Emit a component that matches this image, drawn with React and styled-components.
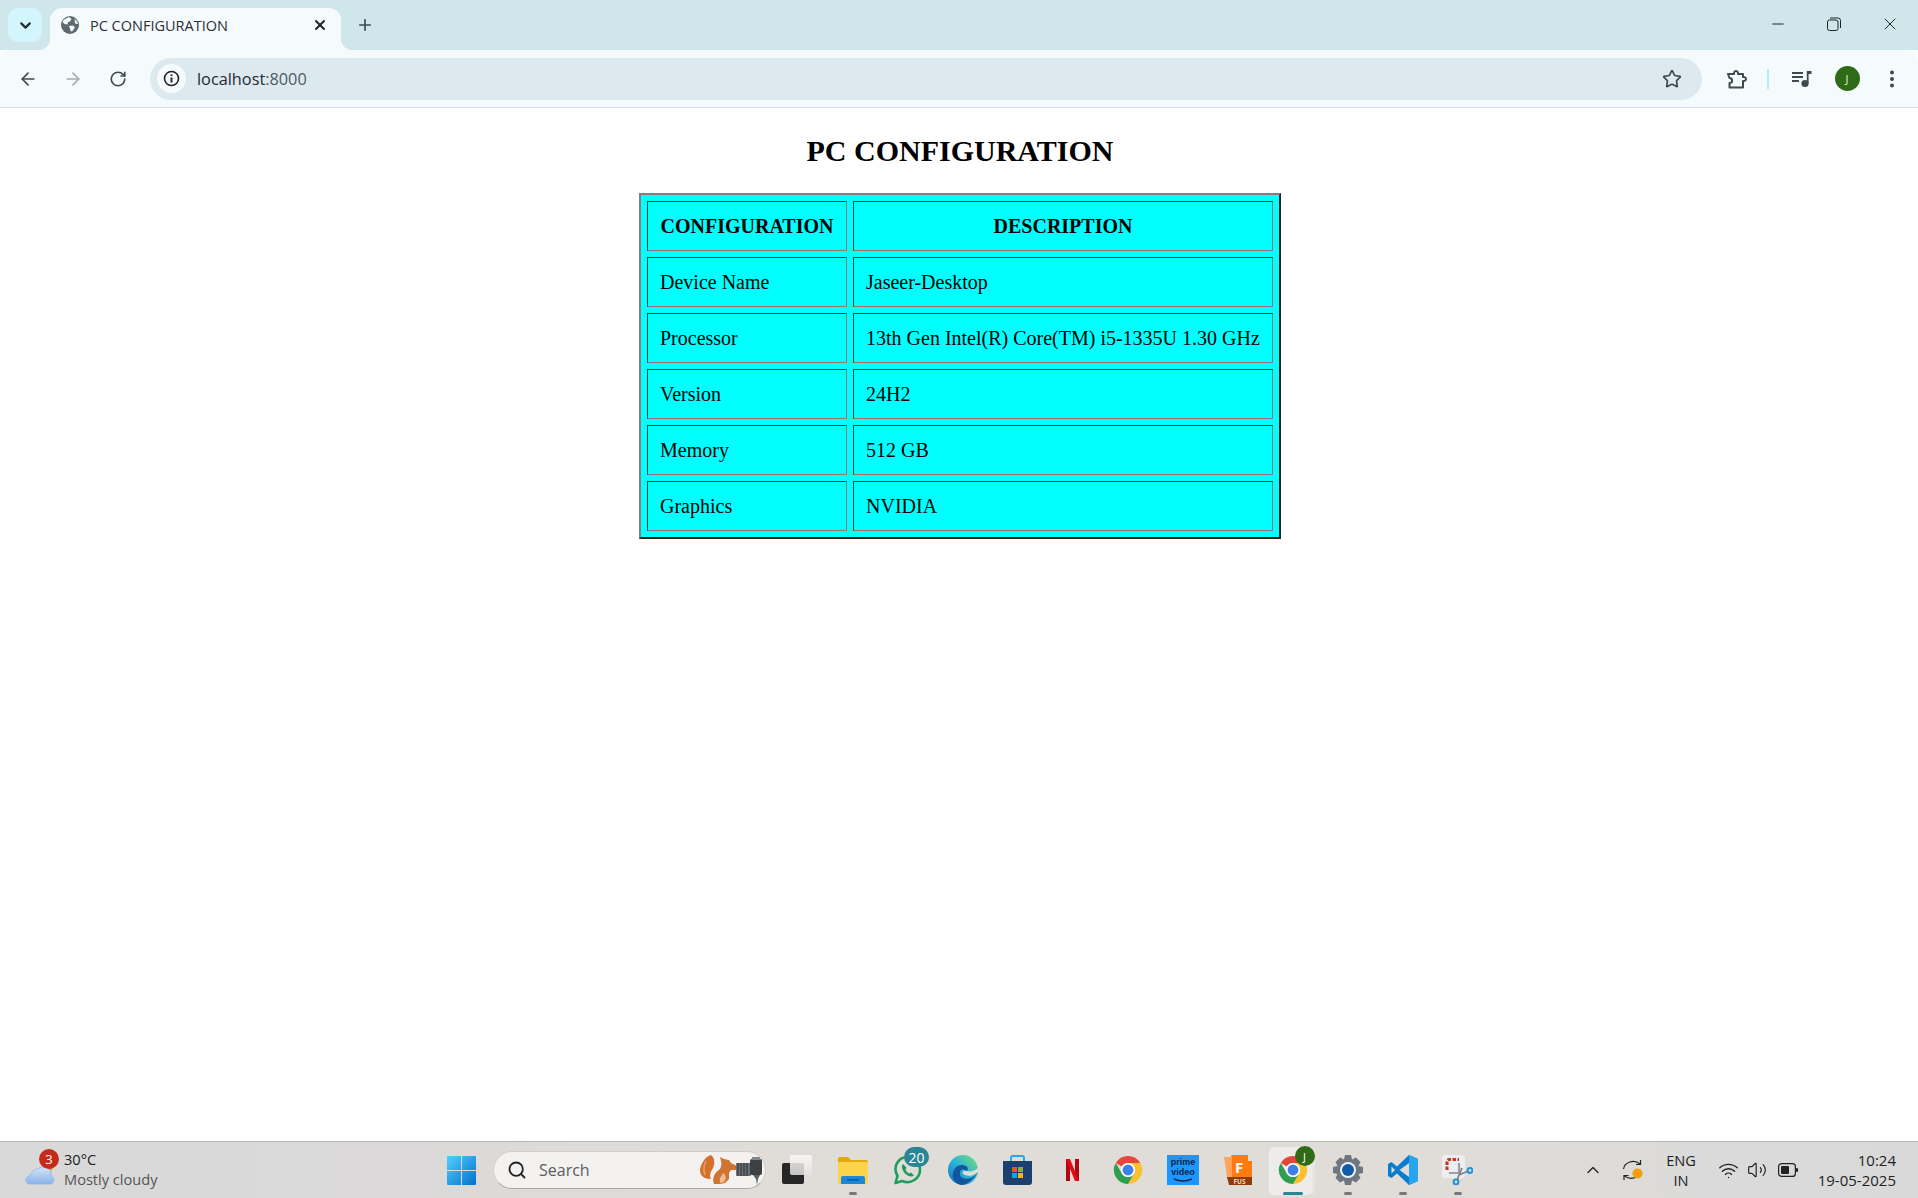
import React from "react";
import styled, { createGlobalStyle } from "styled-components";
import { ArrowLeft, ArrowRight, ChevronDown, ChevronUp, Minus, Plus, RotateCw, Search, Star, Volume2, Wifi, X } from "lucide-react";

const UI_FONT = `"Open Sans", "Noto Sans", sans-serif`;

const GlobalStyle = createGlobalStyle`
  html, body {
    margin: 0;
    padding: 0;
    height: 100%;
    overflow: hidden;
    background: white;
  }
  #root {
    height: 100%;
  }
`;

const Shell = styled.div`
  height: 100vh;
  display: flex;
  flex-direction: column;
  font-family: ${UI_FONT};
`;

const TabStrip = styled.div`
  flex: 0 0 50px;
  display: flex;
  align-items: flex-end;
  background: #cfe6eb;
  padding-left: 8px;
  color: #2a3338;
`;

const TabSearch = styled.div`
  width: 34px;
  height: 34px;
  margin-bottom: 8px;
  border-radius: 10px;
  background: #d3f6fd;
  display: flex;
  align-items: center;
  justify-content: center;
`;

const Tab = styled.div`
  position: relative;
  width: 291px;
  height: 42px;
  margin-left: 8px;
  box-sizing: border-box;
  padding: 0 13px 8px 11px;
  background: #f5fafd;
  border-radius: 12px 12px 0 0;
  display: flex;
  align-items: center;
  &::before, &::after {
    content: "";
    position: absolute;
    bottom: 0;
    width: 12px;
    height: 12px;
  }
  &::before {
    left: -12px;
    background: radial-gradient(circle at 0 0, transparent 12px, #f5fafd 12.5px);
  }
  &::after {
    right: -12px;
    background: radial-gradient(circle at 100% 0, transparent 12px, #f5fafd 12.5px);
  }
`;

const TabTitle = styled.span`
  flex: 1;
  margin-left: 11px;
  font-size: 14.5px;
  color: #2b2f33;
  white-space: nowrap;
`;

const NewTab = styled.div`
  margin: 0 0 16px 15px;
  display: flex;
  color: #3c4a50;
`;

const WindowControls = styled.div`
  margin-left: auto;
  align-self: flex-start;
  display: flex;
  color: #222;
`;

const WindowControl = styled.div`
  width: 56px;
  height: 48px;
  display: flex;
  align-items: center;
  justify-content: center;
`;

const Toolbar = styled.div`
  flex: 0 0 57px;
  box-sizing: border-box;
  display: flex;
  align-items: center;
  background: #f5fafd;
  border-radius: 10px 10px 0 0;
  margin-top: 0;
  color: #3d4b51;
`;

const NavSlot = styled.div`
  width: ${(props) => props.$width || 45}px;
  margin-left: ${(props) => props.$left || 0}px;
  display: flex;
  justify-content: center;
  color: ${(props) => props.$muted ? "#a3abaf" : "#3d4b51"};
`;

const Omnibox = styled.div`
  width: 1552px;
  height: 42px;
  margin-left: 10px;
  box-sizing: border-box;
  padding: 0 20px 0 7px;
  border-radius: 21px;
  background: #dceaef;
  display: flex;
  align-items: center;
`;

const SiteInfo = styled.div`
  width: 29px;
  height: 29px;
  border-radius: 50%;
  background: #f5fafd;
  display: flex;
  align-items: center;
  justify-content: center;
`;

const Address = styled.span`
  flex: 1;
  margin-left: 11px;
  font-size: 16.3px;
  color: #1f2933;
  span {
    color: #4d5a61;
  }
`;

const Divider = styled.div`
  width: 2px;
  height: 20px;
  margin-left: 8px;
  background: #aeeffc;
`;

const Avatar = styled.div`
  width: 25px;
  height: 25px;
  border-radius: 50%;
  background: #2f6a17;
  color: #e6f0dd;
  font-size: 11px;
  display: flex;
  align-items: center;
  justify-content: center;
`;

const Rule = styled.div`
  flex: 0 0 1px;
  background: #d5e2e5;
`;

const Page = styled.main`
  flex: 1;
  padding-left: 2px;
  background: white;
  font-family: "Liberation Serif", "Times New Roman", serif;
  color: black;
`;

const Heading = styled.h1`
  margin: 0;
  padding-top: 24px;
  height: 61px;
  box-sizing: content-box;
  text-align: center;
  font-size: 30px;
  line-height: 37px;
  font-weight: bold;
`;

const ConfigTable = styled.table`
  margin: 0 auto;
  border-collapse: separate;
  border-spacing: 6px;
  border-width: 2px;
  border-style: solid;
  border-color: #808080 #222 #222 #808080;
  background: #00ffff;
  font-size: 20px;
`;

const HeadCell = styled.th`
  height: 50px;
  box-sizing: border-box;
  padding: 0 12px;
  width: ${(props) => props.$width}px;
  border-width: 1px;
  border-style: solid;
  border-color: #1c3a3f #a07070 #a07070 #1c3a3f;
  font-weight: bold;
  text-align: center;
`;

const Cell = styled.td`
  height: 50px;
  box-sizing: border-box;
  padding: 0 12px;
  border-width: 1px;
  border-style: solid;
  border-color: #1c3a3f #a07070 #a07070 #1c3a3f;
`;

const Taskbar = styled.footer`
  flex: 0 0 57px;
  box-sizing: border-box;
  border-top: 1px solid #b8b6b4;
  display: flex;
  align-items: center;
  background: linear-gradient(90deg, #d9d9da 0%, #dbd9d9 20%, #e0dcd8 40%, #e0dcd8 75%, #dcdbda 85%, #d9d9d9 100%);
  color: #1c1c1c;
`;

const Weather = styled.div`
  flex: 0 0 434px;
  box-sizing: border-box;
  padding-left: 25px;
  display: flex;
  align-items: center;
`;

const WeatherIcon = styled.div`
  position: relative;
  width: 30px;
  height: 40px;
  display: flex;
  align-items: flex-end;
  padding-bottom: 5px;
  box-sizing: border-box;
`;

const CountBadge = styled.span`
  position: absolute;
  top: ${(props) => props.$top}px;
  right: ${(props) => props.$right}px;
  min-width: ${(props) => props.$size}px;
  height: ${(props) => props.$height || props.$size}px;
  border-radius: 10px;
  background: ${(props) => props.$color};
  color: white;
  font-size: ${(props) => props.$font}px;
  display: flex;
  align-items: center;
  justify-content: center;
`;

const WeatherText = styled.div`
  margin: 0 0 2px 9px;
  font-size: 14.6px;
  line-height: 20px;
  color: #202020;
  small {
    display: block;
    font-size: 14.6px;
    color: #555;
  }
`;

const Slot = styled.div`
  position: relative;
  flex: 0 0 55px;
  height: 56px;
  display: flex;
  align-items: center;
  justify-content: center;
`;

const ActiveTile = styled.div`
  position: absolute;
  left: 4px;
  top: 5px;
  width: 43px;
  height: 48px;
  border-radius: 5px;
  background: #eeecea;
  box-shadow: 4px 0 0 -1px #e8e5e2;
`;

const RunningMark = styled.span`
  position: absolute;
  bottom: 3px;
  left: 50%;
  transform: translateX(-50%);
  width: ${(props) => props.$active ? 20 : 8}px;
  height: 3px;
  border-radius: 2px;
  background: ${(props) => props.$active ? "#2a8595" : "#77787a"};
`;

const IconLayer = styled.div`
  position: relative;
  display: flex;
`;

const TaskSearch = styled.div`
  flex: 0 0 273px;
  height: 38px;
  margin: 0 4px;
  box-sizing: border-box;
  padding: 0 3px 0 13px;
  border-radius: 19px;
  background: #f3f2f1;
  border: 1px solid #d0cdca;
  border-bottom-color: #aaa8a6;
  display: flex;
  align-items: center;
  color: #222;
`;

const SearchLabel = styled.span`
  flex: 1;
  margin-left: 12px;
  font-size: 16px;
  color: #5c5c5c;
`;

const Tray = styled.div`
  margin-left: 88px;
  display: flex;
  align-items: center;
  color: #222;
`;

const TrayItem = styled.div`
  flex: 0 0 ${(props) => props.$width}px;
  display: flex;
  justify-content: center;
`;

const Language = styled.div`
  text-align: center;
  font-size: 14.6px;
  line-height: 20px;
`;

const Clock = styled.div`
  flex: 0 0 87px;
  text-align: right;
  font-size: 15px;
  line-height: 20px;
  white-space: nowrap;
`;

const rows = [
  ["Device Name", "Jaseer-Desktop"],
  ["Processor", "13th Gen Intel(R) Core(TM) i5-1335U 1.30 GHz"],
  ["Version", "24H2"],
  ["Memory", "512 GB"],
  ["Graphics", "NVIDIA"],
];

const GlobeIcon = () => <svg width="18" height="18" viewBox="0 0 18 18">
  <circle cx="9" cy="9" r="9" fill="#5f6a70" />
  <path d="M3 3.5 L8 1 L10.5 3 L9 5.5 L7 6 L6.5 8.5 L3.5 8 L1.5 6 Z" fill="#f5fafd" />
  <path d="M8 10 L12 9.5 L14 11.5 L11 15.5 L9.5 15 L9 12.5 Z" fill="#f5fafd" />
  <path d="M13.5 3 L16 5 L17 8 L14 7.5 Z" fill="#f5fafd" />
</svg>;

const InfoIcon = () => <svg width="17" height="17" viewBox="0 0 17 17" fill="none" stroke="#222">
  <circle cx="8.5" cy="8.5" r="7" strokeWidth="1.6" />
  <path d="M8.5 7.5 V12.5" strokeWidth="1.9" />
  <path d="M8.5 4.4 V6" strokeWidth="1.9" />
</svg>;

const RestoreIcon = () => <svg width="14" height="14" viewBox="0 0 14 14" fill="none" stroke="#222" strokeWidth="1">
  <rect x="0.5" y="3" width="10.5" height="10.5" rx="2" />
  <path d="M3 1 H11 Q13.5 1 13.5 3.5 V11" />
</svg>;

const ExtensionIcon = () => <svg width="22" height="22" viewBox="0 0 22 22" fill="none" stroke="#3d4b51" strokeWidth="2" strokeLinejoin="round">
  <path d="M2 6 H8 C7.5 2 12.5 2 12 6 H17 V9 C21 8.5 21 13.5 17 13 V19.5 H3.5 V15 C7 15 7 10 3.5 10 Z" />
</svg>;

const MediaIcon = () => <svg width="20" height="18" viewBox="0 0 20 18" fill="#3d4b51">
  <rect x="0" y="2" width="11" height="2" />
  <rect x="0" y="6" width="11" height="2" />
  <rect x="0" y="10" width="7" height="2" />
  <circle cx="13" cy="13.5" r="3.6" />
  <path d="M14.8 13.5 V1 H19.5 V4 H16.6 V13.5 Z" />
</svg>;

const DotsIcon = () => <svg width="6" height="18" viewBox="0 0 6 18" fill="#3d4b51">
  <circle cx="3" cy="2.5" r="2" />
  <circle cx="3" cy="9" r="2" />
  <circle cx="3" cy="15.5" r="2" />
</svg>;

const CloudIcon = () => <svg width="30" height="22" viewBox="0 0 30 22">
  <defs>
    <linearGradient id="cloudFill" x1="0" y1="0" x2="0" y2="1">
      <stop offset="0" stopColor="#d4e4f8" />
      <stop offset="1" stopColor="#8ab2ea" />
    </linearGradient>
  </defs>
  <circle cx="24" cy="4" r="4" fill="#f0922b" />
  <path d="M5 21 C0 21 -1 14 5 13 C6 8 10 6 13 6 C16 3 24 3 26 9 C26 11 26 12 26 13 C30 14 30 21 25 21 Z" fill="url(#cloudFill)" stroke="#8ab2ea" strokeWidth="0.8" />
</svg>;

const WindowsIcon = () => <svg width="29" height="29" viewBox="0 0 29 29">
  <defs>
    <linearGradient id="winFill" x1="0" y1="0" x2="1" y2="1">
      <stop offset="0" stopColor="#4fd1fb" />
      <stop offset="1" stopColor="#0370d0" />
    </linearGradient>
  </defs>
  <path d="M1 0 H14 V14 H0 V1 Q0 0 1 0 Z M15 0 H28 Q29 0 29 1 V14 H15 Z M0 15 H14 V29 H1 Q0 29 0 28 Z M15 15 H29 V28 Q29 29 28 29 H15 Z" fill="url(#winFill)" />
</svg>;

const SquirrelIcon = () => <svg width="62" height="30" viewBox="0 0 62 30">
  <path d="M11 0 C6 1 1 8 0 15 C0 21 4 24 11 24 C9 20 11 16 13 13 C15 9 15 3 11 0 Z" fill="#d4702c" />
  <path d="M6 6 C4 10 3 15 5 20" fill="none" stroke="#e9a06a" strokeWidth="1.5" />
  <path d="M14 29 C12 24 14 18 19 15 C21 13 22 10 21 6 L20 2 L24 4 L29 5 L31 8 L37 11 L36 15 L31 15 L29 18 L29 24 L25 28 L20 29 Z" fill="#cf7533" />
  <path d="M20 28 C19 24 21 20 24 18 L26 23 L24 27 Z" fill="#efbd94" />
  <rect x="36" y="8" width="15" height="13" rx="1" fill="#6a7075" />
  <path d="M38 8 V21 M41 8 V21 M44 8 V21 M47 8 V21" stroke="#33373a" strokeWidth="1.2" />
  <rect x="50" y="4" width="12" height="16" rx="2" fill="#3c4043" />
  <rect x="52" y="2" width="8" height="3" fill="#82878b" />
  <path d="M53 20 H60 L58 24 L57 30 L56 24 Z" fill="#5a5f63" />
</svg>;

const TaskViewIcon = () => <svg width="32" height="30" viewBox="0 0 32 30">
  <defs>
    <linearGradient id="taskBack" x1="0" y1="0" x2="0" y2="1">
      <stop offset="0" stopColor="#fbfbfb" />
      <stop offset="1" stopColor="#e4e2e0" />
    </linearGradient>
  </defs>
  <rect x="0" y="8" width="22" height="21" rx="2" fill="#262626" />
  <rect x="8" y="0" width="22" height="20" rx="2" fill="url(#taskBack)" opacity="0.85" />
</svg>;

const FolderIcon = () => <svg width="30" height="28" viewBox="0 0 30 28">
  <path d="M0 3 Q0 1 2 1 H10 L13 4 H28 Q30 4 30 6 V10 H0 Z" fill="#e2a812" />
  <rect x="0" y="6" width="30" height="22" rx="1" fill="#fbd44a" />
  <path d="M3 28 V22 Q3 20 5 20 H25 Q27 20 27 22 V28 Z" fill="#1d88d8" />
  <rect x="9" y="23" width="12" height="1.6" fill="#0c5ea8" />
</svg>;

const WhatsappIcon = () => <svg width="29" height="30" viewBox="0 0 29 30" fill="none">
  <path d="M2.5 28 L4.5 21 C-1 11 6 2 14.5 2 C22 2 27 8 27 15 C27 23 18 30 9 26 Z" stroke="#1f9d5c" strokeWidth="2.6" strokeLinejoin="round" />
  <path d="M10 9 C8 11 9 15 12 18.5 C15 21.5 19 22.5 21 20.5 L18 17.5 L16 18.5 C14.5 17.5 13 16 12.5 14.5 L13.5 12.5 Z" fill="#1f9d5c" />
</svg>;

const EdgeIcon = () => <svg width="30" height="30" viewBox="0 0 30 30">
  <defs>
    <linearGradient id="edgeFill" x1="0" y1="1" x2="1" y2="0">
      <stop offset="0" stopColor="#0f6cc0" />
      <stop offset="0.5" stopColor="#2cb6d8" />
      <stop offset="1" stopColor="#7be06a" />
    </linearGradient>
  </defs>
  <circle cx="15" cy="15" r="15" fill="url(#edgeFill)" />
  <path d="M30 17 C26 24 19 30 13 30 C5 28 3 20 6 15 C8 10 14 9 18 11 C21 13 20 16 18 16 C15 13 11 15 12 20 C14 26 24 25 30 17 Z" fill="#11569f" />
  <path d="M18 16 C22 17 27 16 30 13 L30 17 C26 21 20 22 15 19 C14 17 16 15 18 16 Z" fill="#e0dcd8" />
</svg>;

const StoreIcon = () => <svg width="29" height="31" viewBox="0 0 29 31">
  <path d="M8 7 V3 Q8 1 10 1 H19 Q21 1 21 3 V7" fill="none" stroke="#26a8e8" strokeWidth="2" />
  <path d="M0 6 H29 V27 Q29 30 26 30 H3 Q0 30 0 27 Z" fill="#1c3f70" />
  <rect x="9" y="12" width="5" height="5" fill="#e8562a" />
  <rect x="15" y="12" width="5" height="5" fill="#80b820" />
  <rect x="9" y="18" width="5" height="5" fill="#10a5e8" />
  <rect x="15" y="18" width="5" height="5" fill="#fbb40c" />
</svg>;

const NetflixIcon = () => <svg width="13" height="22" viewBox="0 0 13 22">
  <path d="M0 0 H4 V22 L0 22 Z" fill="#b20710" />
  <path d="M9 0 H13 V22 L9 22 Z" fill="#b20710" />
  <path d="M0 0 H4 L13 22 H9 Z" fill="#e50914" />
</svg>;

const ChromeIcon = () => <svg width="30" height="30" viewBox="0 0 32 32">
  <path d="M3 8.5 A15 15 0 0 1 29 8.5 L16 8.5 A7.5 7.5 0 0 0 9.5 12.25 Z" fill="#e8453a" />
  <path d="M29 8.5 A15 15 0 0 1 16 31 L22.5 19.75 A7.5 7.5 0 0 0 22.5 12.25 L16 8.5 Z" fill="#fbc02d" />
  <path d="M16 31 A15 15 0 0 1 3 8.5 L9.5 19.75 A7.5 7.5 0 0 0 22.5 19.75 Z" fill="#2f9e4f" />
  <circle cx="16" cy="16" r="7.5" fill="white" />
  <circle cx="16" cy="16" r="5.8" fill="#3c80e8" />
</svg>;

const PrimeIcon = () => <svg width="32" height="30" viewBox="0 0 32 30">
  <rect width="32" height="30" fill="#1a98ff" />
  <text x="16" y="10" textAnchor="middle" fontSize="9" fontWeight="700" fontFamily="Liberation Sans, sans-serif" fill="#10253f">prime</text>
  <text x="16" y="20.4" textAnchor="middle" fontSize="9" fontWeight="700" fontFamily="Liberation Sans, sans-serif" fill="#10253f">video</text>
  <path d="M7 24 Q16 28 25 24" fill="none" stroke="#10253f" strokeWidth="1.5" />
</svg>;

const FusionIcon = () => <svg width="28" height="31" viewBox="0 0 28 31">
  <path d="M3 7 L8 0 H24 V6 H28 V24 H3 Z" fill="#ff7a10" />
  <path d="M0 2 H8 V22 H3 Z" fill="#ffa45a" />
  <path d="M3 22 H28 V30 H5 Z" fill="#8e3d08" />
  <text x="15" y="18" textAnchor="middle" fontSize="15" fontWeight="700" fontFamily="Open Sans, sans-serif" fill="white">F</text>
  <text x="15.5" y="29" textAnchor="middle" fontSize="6.5" fontWeight="700" fontFamily="Open Sans, sans-serif" fill="#f3d9c6">FUS</text>
</svg>;

const GearIcon = () => <svg width="30" height="30" viewBox="0 0 30 30">
  <path d="M12 0 H18 L19 4.5 L23 2.5 L27.5 7 L25.5 11 L30 12 V18 L25.5 19 L27.5 23 L23 27.5 L19 25.5 L18 30 H12 L11 25.5 L7 27.5 L2.5 23 L4.5 19 L0 18 V12 L4.5 11 L2.5 7 L7 2.5 L11 4.5 Z" fill="#6d7780" />
  <circle cx="15" cy="15" r="8" fill="#eef0f2" />
  <circle cx="15" cy="15" r="6" fill="#0f5cab" />
</svg>;

const VscodeIcon = () => <svg width="30" height="30" viewBox="0 0 30 30">
  <path d="M21 0 L30 4 V26 L21 30 L9 18.5 L3.5 23 L0 21 V9 L3.5 7 L9 11.5 Z" fill="#0a7ccd" />
  <path d="M21 0 L30 4 V26 L21 30 Z" fill="#2aa4ee" />
  <path d="M21 8 V22 L11.5 15 Z" fill="#e0dcd8" />
  <path d="M3.5 11.5 L7 15 L3.5 18.5 Z" fill="#e0dcd8" />
</svg>;

const SnipIcon = () => <svg width="31" height="30" viewBox="0 0 31 30" fill="none">
  <rect x="0" y="0" width="23" height="23" rx="3" fill="#eceef1" />
  <path d="M5 15 V7 Q5 4.5 7.5 4.5 H17" stroke="#c4341f" strokeWidth="3" strokeDasharray="3.4 1.6" />
  <path d="M17 8 V18 H7" stroke="#9aa0a6" strokeWidth="2.2" />
  <path d="M15 25 L20 13 M17 20 L26 16" stroke="#7d8489" strokeWidth="1.8" />
  <circle cx="14" cy="27" r="2.4" stroke="#1f93d6" strokeWidth="2" />
  <circle cx="28" cy="15.5" r="2.4" stroke="#1f93d6" strokeWidth="2" />
</svg>;

const SyncIcon = () => <svg width="22" height="22" viewBox="0 0 22 22" fill="none" stroke="#222" strokeWidth="1.2">
  <path d="M1.5 10 C2.5 3 12 0 18 5" />
  <path d="M18.5 1 V5.5 H14" />
  <path d="M15 17.5 C11 20 6 19.5 2.5 17" />
  <path d="M2 21 V16.5 H6.5" />
  <circle cx="15.5" cy="14.5" r="5" fill="#f59e0b" stroke="none" />
</svg>;

const BatteryIcon = () => <svg width="20" height="14" viewBox="0 0 20 14">
  <rect x="0.6" y="0.6" width="16.8" height="12.8" rx="3" fill="none" stroke="#222" strokeWidth="1.2" />
  <rect x="3" y="3" width="8" height="8" rx="1" fill="#222" />
  <rect x="18" y="5" width="2" height="4" rx="1" fill="#222" />
</svg>;

const apps = [
  {key: "task", icon: <TaskViewIcon />},
  {key: "files", icon: <FolderIcon />, running: true},
  {key: "whatsapp", icon: <WhatsappIcon />, badge: "20"},
  {key: "edge", icon: <EdgeIcon />},
  {key: "store", icon: <StoreIcon />},
  {key: "netflix", icon: <NetflixIcon />},
  {key: "chrome", icon: <ChromeIcon />},
  {key: "prime", icon: <PrimeIcon />},
  {key: "fusion", icon: <FusionIcon />},
  {key: "chrome-active", icon: <ChromeIcon />, active: true},
  {key: "settings", icon: <GearIcon />, running: true},
  {key: "vscode", icon: <VscodeIcon />, running: true},
  {key: "snip", icon: <SnipIcon />, running: true},
];

const AppSlot = ({icon, badge, running, active}) => <Slot>
  {active && <ActiveTile />}
  <IconLayer>
    {icon}
    {badge && <CountBadge $top={-8} $right={-7} $size={25} $height={20} $font={14} $color="#2a8595">{badge}</CountBadge>}
    {active && <CountBadge $top={-9} $right={-7} $size={20} $font={11} $color="#2f6a17">J</CountBadge>}
  </IconLayer>
  {(running || active) && <RunningMark $active={active} />}
</Slot>;

export default function App() {
  return <Shell>
    <GlobalStyle />
    <TabStrip>
      <TabSearch><ChevronDown size={17} strokeWidth={3} color="#1f2a30" /></TabSearch>
      <Tab>
        <GlobeIcon />
        <TabTitle>PC CONFIGURATION</TabTitle>
        <X size={16} strokeWidth={3} color="#222" />
      </Tab>
      <NewTab><Plus size={18} strokeWidth={2.2} /></NewTab>
      <WindowControls>
        <WindowControl><Minus size={18} strokeWidth={1.3} /></WindowControl>
        <WindowControl><RestoreIcon /></WindowControl>
        <WindowControl><X size={20} strokeWidth={1.2} /></WindowControl>
      </WindowControls>
    </TabStrip>
    <Toolbar>
      <NavSlot $left={5}><ArrowLeft size={20} strokeWidth={2} /></NavSlot>
      <NavSlot $muted><ArrowRight size={20} strokeWidth={2} /></NavSlot>
      <NavSlot><RotateCw size={18} strokeWidth={2.2} /></NavSlot>
      <Omnibox>
        <SiteInfo><InfoIcon /></SiteInfo>
        <Address>localhost<span>:8000</span></Address>
        <Star size={20} strokeWidth={2} />
      </Omnibox>
      <NavSlot $left={13} $width={44}><ExtensionIcon /></NavSlot>
      <Divider />
      <NavSlot $left={11} $width={44}><MediaIcon /></NavSlot>
      <NavSlot $left={1} $width={44}><Avatar>J</Avatar></NavSlot>
      <NavSlot><DotsIcon /></NavSlot>
    </Toolbar>
    <Rule />
    <Page>
      <Heading>PC CONFIGURATION</Heading>
      <ConfigTable>
        <thead>
          <tr>
            <HeadCell $width={200}>CONFIGURATION</HeadCell>
            <HeadCell $width={420}>DESCRIPTION</HeadCell>
          </tr>
        </thead>
        <tbody>
          {rows.map(([name, value]) => <tr key={name}>
            <Cell>{name}</Cell>
            <Cell>{value}</Cell>
          </tr>)}
        </tbody>
      </ConfigTable>
    </Page>
    <Taskbar>
      <Weather>
        <WeatherIcon>
          <CloudIcon />
          <CountBadge $top={-1} $right={-4} $size={20} $font={13} $color="#c42b1c">3</CountBadge>
        </WeatherIcon>
        <WeatherText>30°C<small>Mostly cloudy</small></WeatherText>
      </Weather>
      <Slot><WindowsIcon /></Slot>
      <TaskSearch>
        <Search size={20} strokeWidth={2.2} />
        <SearchLabel>Search</SearchLabel>
        <SquirrelIcon />
      </TaskSearch>
      {apps.map(({key, ...app}) => <AppSlot key={key} {...app} />)}
      <Tray>
        <TrayItem $width={40}><ChevronUp size={20} strokeWidth={1.6} /></TrayItem>
        <TrayItem $width={40}><SyncIcon /></TrayItem>
        <TrayItem $width={56}><Language>ENG<br />IN</Language></TrayItem>
        <TrayItem $width={38}><Wifi size={21} strokeWidth={1.6} /></TrayItem>
        <TrayItem $width={20}><Volume2 size={20} strokeWidth={1.4} /></TrayItem>
        <TrayItem $width={42}><BatteryIcon /></TrayItem>
        <Clock>10:24<br />19-05-2025</Clock>
      </Tray>
    </Taskbar>
  </Shell>;
}
